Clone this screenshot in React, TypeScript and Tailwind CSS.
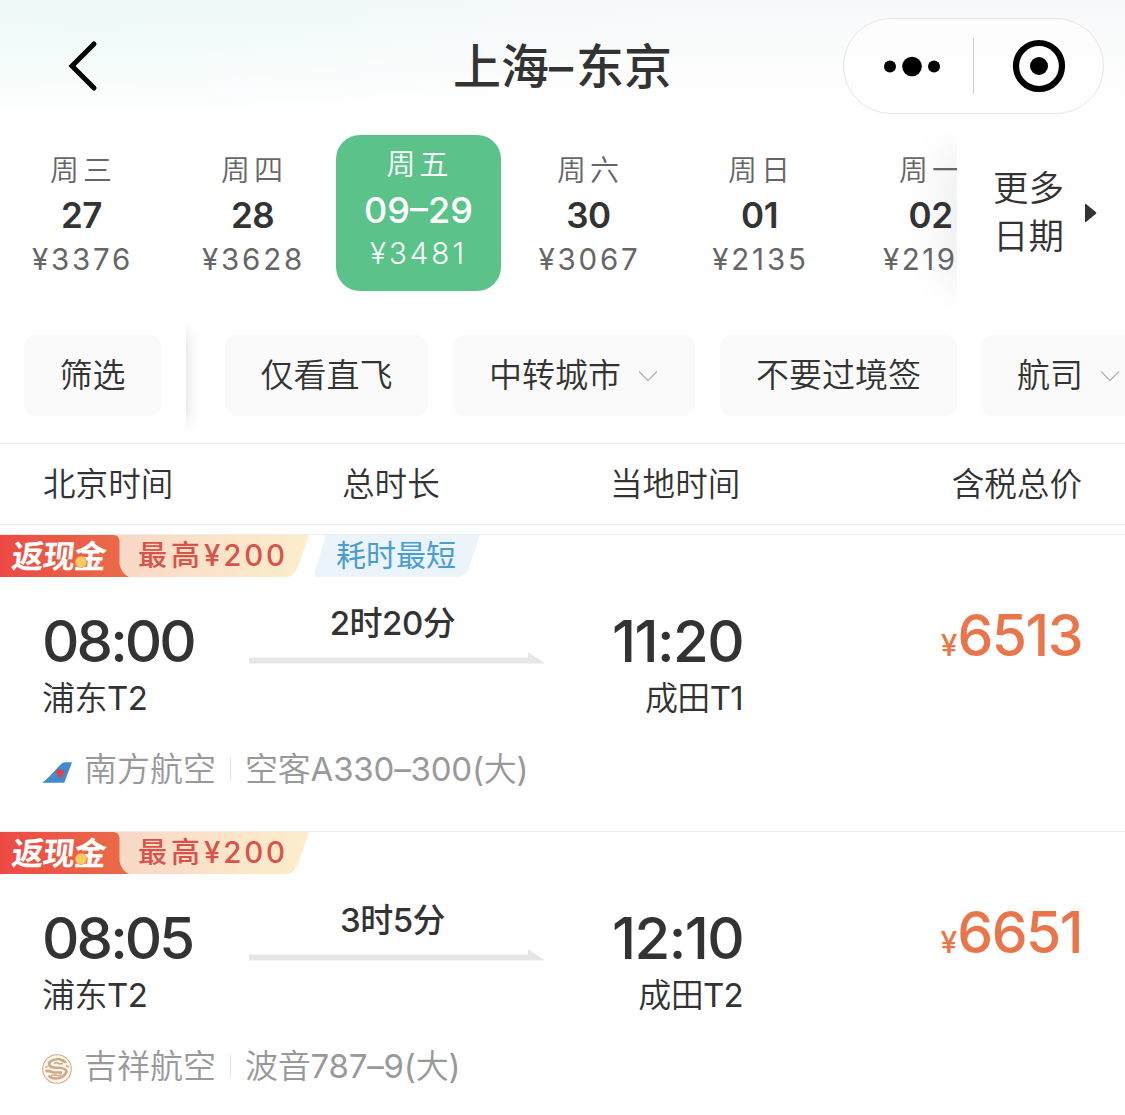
const days = [
  { week: "周三", date: "27", price: "¥3376" },
  { week: "周四", date: "28", price: "¥3628" },
  { week: "周五", date: "09–29", price: "¥3481", active: true },
  { week: "周六", date: "30", price: "¥3067" },
  { week: "周日", date: "01", price: "¥2135" },
  { week: "周一", date: "02", price: "¥219" },
];

const flights = [
  {
    depart: "08:00",
    arrive: "11:20",
    from: "浦东T2",
    to: "成田T1",
    duration: "2时20分",
    price: "6513",
    airline: "南方航空",
    plane: "空客A330–300(大)",
    fastest: true,
    Logo: ChinaSouthernLogo,
  },
  {
    depart: "08:05",
    arrive: "12:10",
    from: "浦东T2",
    to: "成田T2",
    duration: "3时5分",
    price: "6651",
    airline: "吉祥航空",
    plane: "波音787–9(大)",
    fastest: false,
    Logo: JuneyaoLogo,
  },
];

// Hanzi run a touch lighter than the latin letters and digits beside them
function Mixed({ text }: { text: string }) {
  return text.split(/([\u4e00-\u9fff]+)/).map((part, i) => (
    <span key={i} className={i % 2 ? "font-[350]" : "font-normal"}>
      {part}
    </span>
  ));
}

function ChinaSouthernLogo() {
  return (
    <svg className="h-[32px] w-[32px]" viewBox="0 0 32 32">
      <path d="M1.300 26.700C7 22.500 12 17 18.500 9.500Q21.500 6.300 24 6.300H31L23.300 26.700Z" fill="#3f8bcb" />
      <path d="M14.600 14l2.400.6.6-1.600 1.500 1.200 1.500-1.200.6 1.600 2.400-.6-.5 3.200-1.500 1.400.2 1.800-1.500.6-1.200 1.600-1.200-1.600-1.500-.6.2-1.800-1.500-1.400z" fill="#dd3f4c" />
      <path d="M16.800 16.400l1 .8M21.400 16.400l-1 .8M19.100 17.800v2.600" stroke="#8d6ba0" strokeWidth="0.700" fill="none" />
    </svg>
  );
}

function JuneyaoLogo() {
  return (
    <svg className="h-[32px] w-[32px]" viewBox="0 0 32 32" fill="none" stroke="#cfab85">
      <circle cx="16" cy="16" r="14.300" strokeWidth="1.100" fill="#fdf8f2" />
      <path d="M25.500 9C22 9.500 20 5 15.500 6.200C10 7 7 9.500 8.500 12.500C10 15 14 14.500 17 14.800C21 15 25.500 15.500 25.500 18.500C25 22 20 25.500 15 25.500C12 25.500 9 24.500 7.500 22.500" strokeWidth="2.600" />
      <path d="M4.500 18.500C8 16.500 10 19.500 13 19.500H21" strokeWidth="2.600" />
      <path d="M13 10.500l3-1 2.500 1.500 3.500-.5M10 22.500l4-.8 3 1 3.500-1M21 6.500l2.500 1M6.500 13l-2 2M25 12.500l3 1.500" strokeWidth="1.500" />
    </svg>
  );
}

function Chevron() {
  return (
    <svg className="h-[12px] w-[20px] shrink-0" viewBox="0 0 20 12" fill="none">
      <path d="M1 1.500L10 10.500L19 1.500" stroke="#b5b5b5" strokeWidth="1.400" />
    </svg>
  );
}

function Header() {
  return (
    <header className="flex h-[135px] items-start justify-between bg-[radial-gradient(ellipse_55%_90%_at_8%_0%,#eefbf8_0%,rgba(255,255,255,0)_100%),linear-gradient(to_bottom,#f7f8f9_0%,#fff_85%)] pr-[21px] pl-[66px]">
      <div className="w-[216px]">
        <svg className="mt-[38px] h-14 w-9" viewBox="0 0 36 56" fill="none">
          <path d="M28 6L6 28L28 50" stroke="#000" strokeWidth="5" strokeLinecap="round" />
        </svg>
      </div>
      <h1 className="mt-[31px] text-[48px] leading-[72px] font-medium whitespace-nowrap text-[#333]">
        上海<span className="tracking-[3px]">–</span>东京
      </h1>
      <div className="mt-[18px] flex h-24 w-[261px] items-center rounded-full border border-[#e6e6e8] bg-white/60">
        <svg className="h-14 w-[129px]" viewBox="0 0 129 56">
          <circle cx="46" cy="28.500" r="6" />
          <circle cx="68" cy="28.500" r="9.800" />
          <circle cx="90" cy="28.500" r="6" />
        </svg>
        <div className="h-14 w-px bg-[#cfcfd1]" />
        <svg className="h-14 w-[129px]" viewBox="0 0 129 56">
          <circle cx="65" cy="28" r="23" fill="none" stroke="#000" strokeWidth="6.200" />
          <circle cx="65" cy="28" r="9" />
        </svg>
      </div>
    </header>
  );
}

function DateStrip() {
  return (
    <div className="flex h-[175px]">
      <div className="relative w-[957px] overflow-hidden">
        <div className="absolute top-5 -right-6 bottom-8 w-6 shadow-[0_0_52px_rgba(0,0,0,0.16)]" />
        <div className="relative flex w-max gap-[9px]">
          {days.map((day) => (
            <div
              key={day.week}
              className={
                day.active
                  ? "-mr-[3px] -ml-1.5 flex h-[156px] w-[165px] flex-col items-center rounded-3xl bg-[#5bc38a] pt-1.5 text-white"
                  : "flex w-[162px] flex-col pt-3 text-[#666]"
              }
            >
              <span className={day.active ? "pl-0.5 text-[29px] leading-[48px] font-[350] tracking-[4px]" : "pl-[50px] text-[29px] leading-[48px] font-[350] tracking-[4px]"}>
                {day.week}
              </span>
              <span className={day.active ? "-mt-0.5 mb-[-1px] text-[36px] leading-[46px] font-medium" : "-mt-[3px] pl-px text-center text-[35px] leading-[46px] font-semibold tracking-[-0.5px] text-[#333]"}>
                {day.date}
              </span>
              <span className={day.active ? "text-[29.5px] leading-[42px] font-[350] tracking-[3px]" : day.price.length < 5 ? "pl-[34px] text-[29.5px] leading-[42px] tracking-[2.500px]" : "pl-[3px] text-center text-[29.5px] leading-[42px] tracking-[2.800px]"}>
                {day.price}
              </span>
            </div>
          ))}
        </div>
      </div>
      <div className="flex h-[156px] flex-1 items-center gap-[20px] pl-[36px]">
        <span className="w-[71px] text-[35.5px] leading-[48px] font-[350] text-[#333]">
          更多
          <br />
          日期
        </span>
        <svg className="h-5 w-[13px]" viewBox="0 0 13 20">
          <path d="M1 1.500Q1 .5 2 1L12 9.200Q13 10 12 10.800L2 19Q1 19.500 1 18.500Z" fill="#333" />
        </svg>
      </div>
    </div>
  );
}

function Filters() {
  return (
    <div className="flex h-[133px] text-[33px] font-[350] text-[#333]">
      <div className="w-[186px] pt-[25px] pl-6">
        <button className="h-[81px] w-[137px] rounded-xl bg-[#fafafa]">筛选</button>
      </div>
      <div className="relative flex flex-1 gap-[25px] overflow-hidden pt-[25px] pl-[39px] whitespace-nowrap">
        <div className="absolute top-5 bottom-5 -left-6 w-6 shadow-[0_0_16px_rgba(0,0,0,0.15)]" />
        <button className="h-[81px] w-[203px] shrink-0 rounded-xl bg-[#fafafa]">仅看直飞</button>
        <button className="flex h-[81px] w-[242px] shrink-0 items-center gap-[17px] rounded-xl bg-[#fafafa] pl-[36px]">
          中转城市
          <Chevron />
        </button>
        <button className="h-[81px] w-[237px] shrink-0 rounded-xl bg-[#fafafa]">不要过境签</button>
        <button className="-ml-px flex h-[81px] w-[178px] shrink-0 items-center gap-[17px] rounded-xl bg-[#fafafa] pl-[36px]">
          航司
          <Chevron />
        </button>
      </div>
    </div>
  );
}

function CashTag() {
  return (
    <div className="relative h-[42px] w-[309px]">
      <svg className="absolute inset-0 h-[42px] w-[309px]" viewBox="0 0 309 42">
        <defs>
          <linearGradient id="cash-red" x1="0" x2="1">
            <stop offset="0" stopColor="#ec4a44" />
            <stop offset="1" stopColor="#ea6c48" />
          </linearGradient>
          <linearGradient id="cash-peach" x1="0" x2="1">
            <stop offset="0" stopColor="#f9d6c6" />
            <stop offset="1" stopColor="#fbeecb" />
          </linearGradient>
        </defs>
        <path d="M100 0H309L298 32Q294 42 285 42H100Z" fill="url(#cash-peach)" />
        <path d="M0 0H113Q119 0 119.500 6V29Q121 38 129 42H0Z" fill="url(#cash-red)" />
      </svg>
      <div className="relative flex h-[42px] items-center">
        <span className="mt-px ml-[12px] w-[126px] -skew-x-6 text-[32px] leading-[42px] font-bold tracking-[-0.800px] text-white">返现金</span>
        <span className="-mt-0.5 text-[29px] leading-[40px] font-medium tracking-[4px] whitespace-nowrap text-[#d9534a]">
          最高<span className="text-[29.500px] tracking-[2.800px]">¥200</span>
        </span>
      </div>
      <div className="absolute top-[21px] left-[75px] size-[12px] rounded-full border border-[#f0ae4c] bg-[#f8cb62]" />
    </div>
  );
}

function FastTag() {
  return (
    <div className="relative ml-[5px] h-[42px] w-[166px]">
      <svg className="absolute inset-0 h-[42px] w-[166px]" viewBox="0 0 166 42">
        <path d="M12 0H166L155 33Q151 42 143 42H5Q-1 42 1 36Z" fill="#eaf4fa" />
      </svg>
      <span className="relative block pl-[22px] text-[30px] leading-[41px] whitespace-nowrap text-[#4a9dd3]">耗时最短</span>
    </div>
  );
}

type Flight = (typeof flights)[number];

function FlightCard({ flight }: { flight: Flight }) {
  const { Logo } = flight;
  return (
    <article className="h-[297px] border-t border-[#ececec] text-[#333]">
      <div className="flex">
        <CashTag />
        {flight.fastest && <FastTag />}
      </div>
      <div className="flex h-[144px] pr-[43px] pl-[43px]">
        <div className="w-[206px] pt-[28px]">
          <div className="-ml-px text-[58px] leading-[72px] font-[550] tracking-[-2.900px]">{flight.depart}</div>
          <div className="-ml-px text-[33px] leading-[42px] tracking-[-0.500px]">
            <Mixed text={flight.from} />
          </div>
        </div>
        <div className="flex w-[297px] flex-col items-center pt-[24px]">
          <div className="mr-[10px] text-[33px] leading-[44px] font-medium tracking-[-0.500px]">{flight.duration}</div>
          <svg className="mt-[6px] h-[13px] w-[297px]" viewBox="0 0 297 13">
            <path d="M0 6.500H279V1L296 12.500H0Z" fill="#e6e6e6" />
          </svg>
        </div>
        <div className="w-[197px] pt-[28px] text-right">
          <div className="text-[58px] leading-[72px] font-[550] tracking-[-1.600px]">{flight.arrive}</div>
          <div className="text-[33px] leading-[42px] tracking-[-0.700px]">
            <Mixed text={flight.to} />
          </div>
        </div>
        <div className="flex-1 pt-[23px] text-right leading-[72px] font-medium text-[#e8764a]">
          <span className="text-[30px]">¥</span>
          <span className="text-[57px] tracking-[-1.500px]">{flight.price}</span>
        </div>
      </div>
      <div className="flex items-center pt-[24px] pl-[41px] text-[33px] leading-[48px] text-[#999]">
        <div className="pt-1.5">
          <Logo />
        </div>
        <span className="ml-[11px] font-[350]">{flight.airline}</span>
        <span className="mx-[14px] h-6 w-px bg-[#e4e4e4]" />
        <span className="tracking-[-0.200px]">
          <Mixed text={flight.plane} />
        </span>
      </div>
    </article>
  );
}

export default function App() {
  return (
    <main className="h-[1115px] w-[1125px] overflow-hidden bg-white font-['Inter','Noto_Sans_CJK_SC',sans-serif]">
      <Header />
      <DateStrip />
      <Filters />
      <div className="flex h-[82px] items-center border-y border-[#ececec] px-[43px] text-[32.6px] font-[350] text-[#333]">
        <span className="w-[299px]">北京时间</span>
        <span className="w-[268px]">总时长</span>
        <span className="flex-1">当地时间</span>
        <span>含税总价</span>
      </div>
      <div className="mt-[9px]">
        {flights.map((flight) => (
          <FlightCard key={flight.depart} flight={flight} />
        ))}
      </div>
    </main>
  );
}
